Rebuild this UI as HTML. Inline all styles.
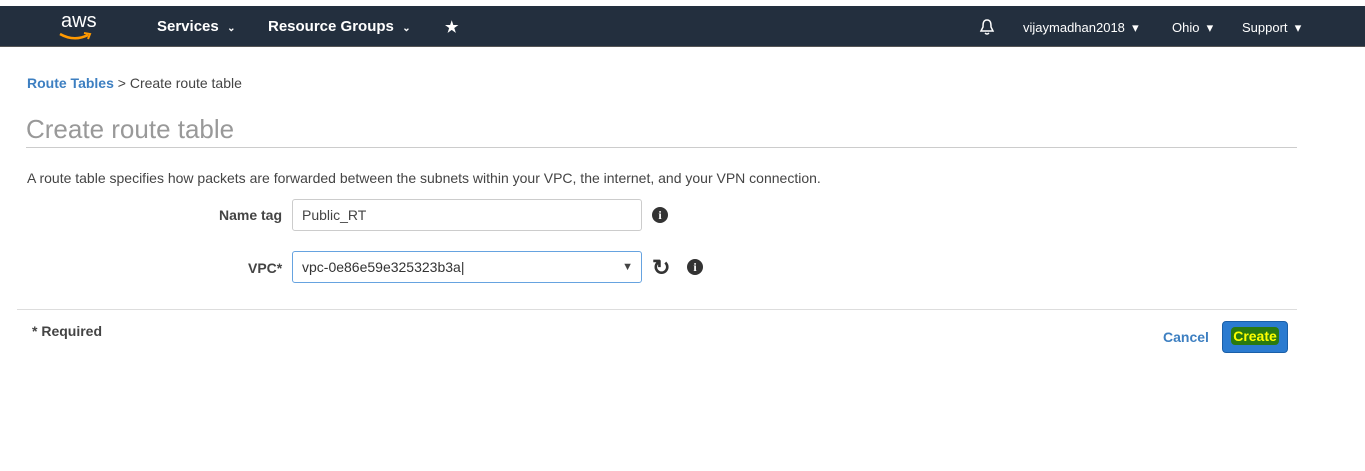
<!DOCTYPE html>
<html><head><style>
body{margin:0;width:1365px;height:471px;background:#fff;font-family:"Liberation Sans",Arial,sans-serif;position:relative;overflow:hidden}
.a{position:absolute;white-space:nowrap}
.nav{position:absolute;left:0;top:6px;width:1365px;height:40px;background:#232f3e;border-bottom:1px solid #555}
.nv{color:#fff;font-weight:bold;font-size:15px;top:12px}
.nr{color:#fff;font-size:13px;top:14px}
.inp{position:absolute;border:1px solid #ccc;border-radius:3px;background:#fff;font-size:14px;color:#444;box-sizing:border-box;padding-left:9px}
.info{position:absolute;width:16px;height:16px;border-radius:50%;background:#333;color:#fff;font:bold 12px "Liberation Serif",serif;text-align:center;line-height:16px}
</style></head><body>
<div class="nav">
<div class="a" style="left:61px;top:4px;color:#fff;font-size:20px">aws</div>
<svg class="a" style="left:58px;top:26px" width="34" height="10"><path d="M2 2 Q16 10 30 3" stroke="#f90" stroke-width="2.5" fill="none"/><path d="M26 1 L32 2 L30 7" stroke="#f90" stroke-width="2" fill="none"/></svg>
<div class="a nv" style="left:157px">Services &nbsp;<span style="font-size:10px">⌄</span></div>
<div class="a nv" style="left:268px">Resource Groups &nbsp;<span style="font-size:10px">⌄</span></div>
<div class="a nv" style="left:445px">★</div>
<svg class="a" style="left:979px;top:12px" width="16" height="18"><path d="M8 2 C4 2 4 6 4 9 L2 13 H14 L12 9 C12 6 12 2 8 2 Z M6 15 Q8 17 10 15" stroke="#fff" stroke-width="1.5" fill="none"/></svg>
<div class="a nr" style="left:1023px">vijaymadhan2018 &nbsp;▾</div>
<div class="a nr" style="left:1172px">Ohio &nbsp;▾</div>
<div class="a nr" style="left:1242px">Support &nbsp;▾</div>
</div>
<div class="a" style="left:27px;top:75px;font-size:14px;color:#444"><b style="color:#3d7fc1">Route Tables</b> &gt; Create route table</div>
<div class="a" style="left:26px;top:114px;font-size:26px;color:#999">Create route table</div>
<div class="a" style="left:26px;top:147px;width:1271px;border-top:1px solid #ccc"></div>
<div class="a" style="left:27px;top:170px;font-size:14px;color:#444">A route table specifies how packets are forwarded between the subnets within your VPC, the internet, and your VPN connection.</div>
<div class="a" style="left:219px;top:207px;font-size:14px;font-weight:bold;color:#444">Name tag</div>
<div class="inp" style="left:292px;top:199px;width:350px;height:32px;line-height:30px">Public_RT</div>
<div class="info" style="left:652px;top:207px">i</div>
<div class="a" style="left:248px;top:260px;font-size:14px;font-weight:bold;color:#444">VPC*</div>
<div class="inp" style="left:292px;top:251px;width:350px;height:32px;line-height:30px;border-color:#66a3e0;color:#333">vpc-0e86e59e325323b3a|<span style="position:absolute;right:8px;font-size:11px;color:#444">▼</span></div>
<div class="a" style="left:652px;top:255px;font-size:22px;font-weight:bold;color:#333">↻</div>
<div class="info" style="left:687px;top:259px">i</div>
<div class="a" style="left:17px;top:309px;width:1280px;border-top:1px solid #ddd"></div>
<div class="a" style="left:32px;top:323px;font-size:14px;font-weight:bold;color:#444">* Required</div>
<div class="a" style="left:1163px;top:329px;font-size:14px;font-weight:bold;color:#3d7fc1">Cancel</div>
<div class="a" style="left:1222px;top:321px;width:66px;height:32px;background:#2b7bd0;border:1px solid #1a5fa8;border-radius:4px;box-sizing:border-box;text-align:center;line-height:29px;font-size:14px;font-weight:bold"><span style="background:#2a7a10;color:#ff0;padding:1px 2px;border-radius:4px">Create</span></div>
</body></html>
